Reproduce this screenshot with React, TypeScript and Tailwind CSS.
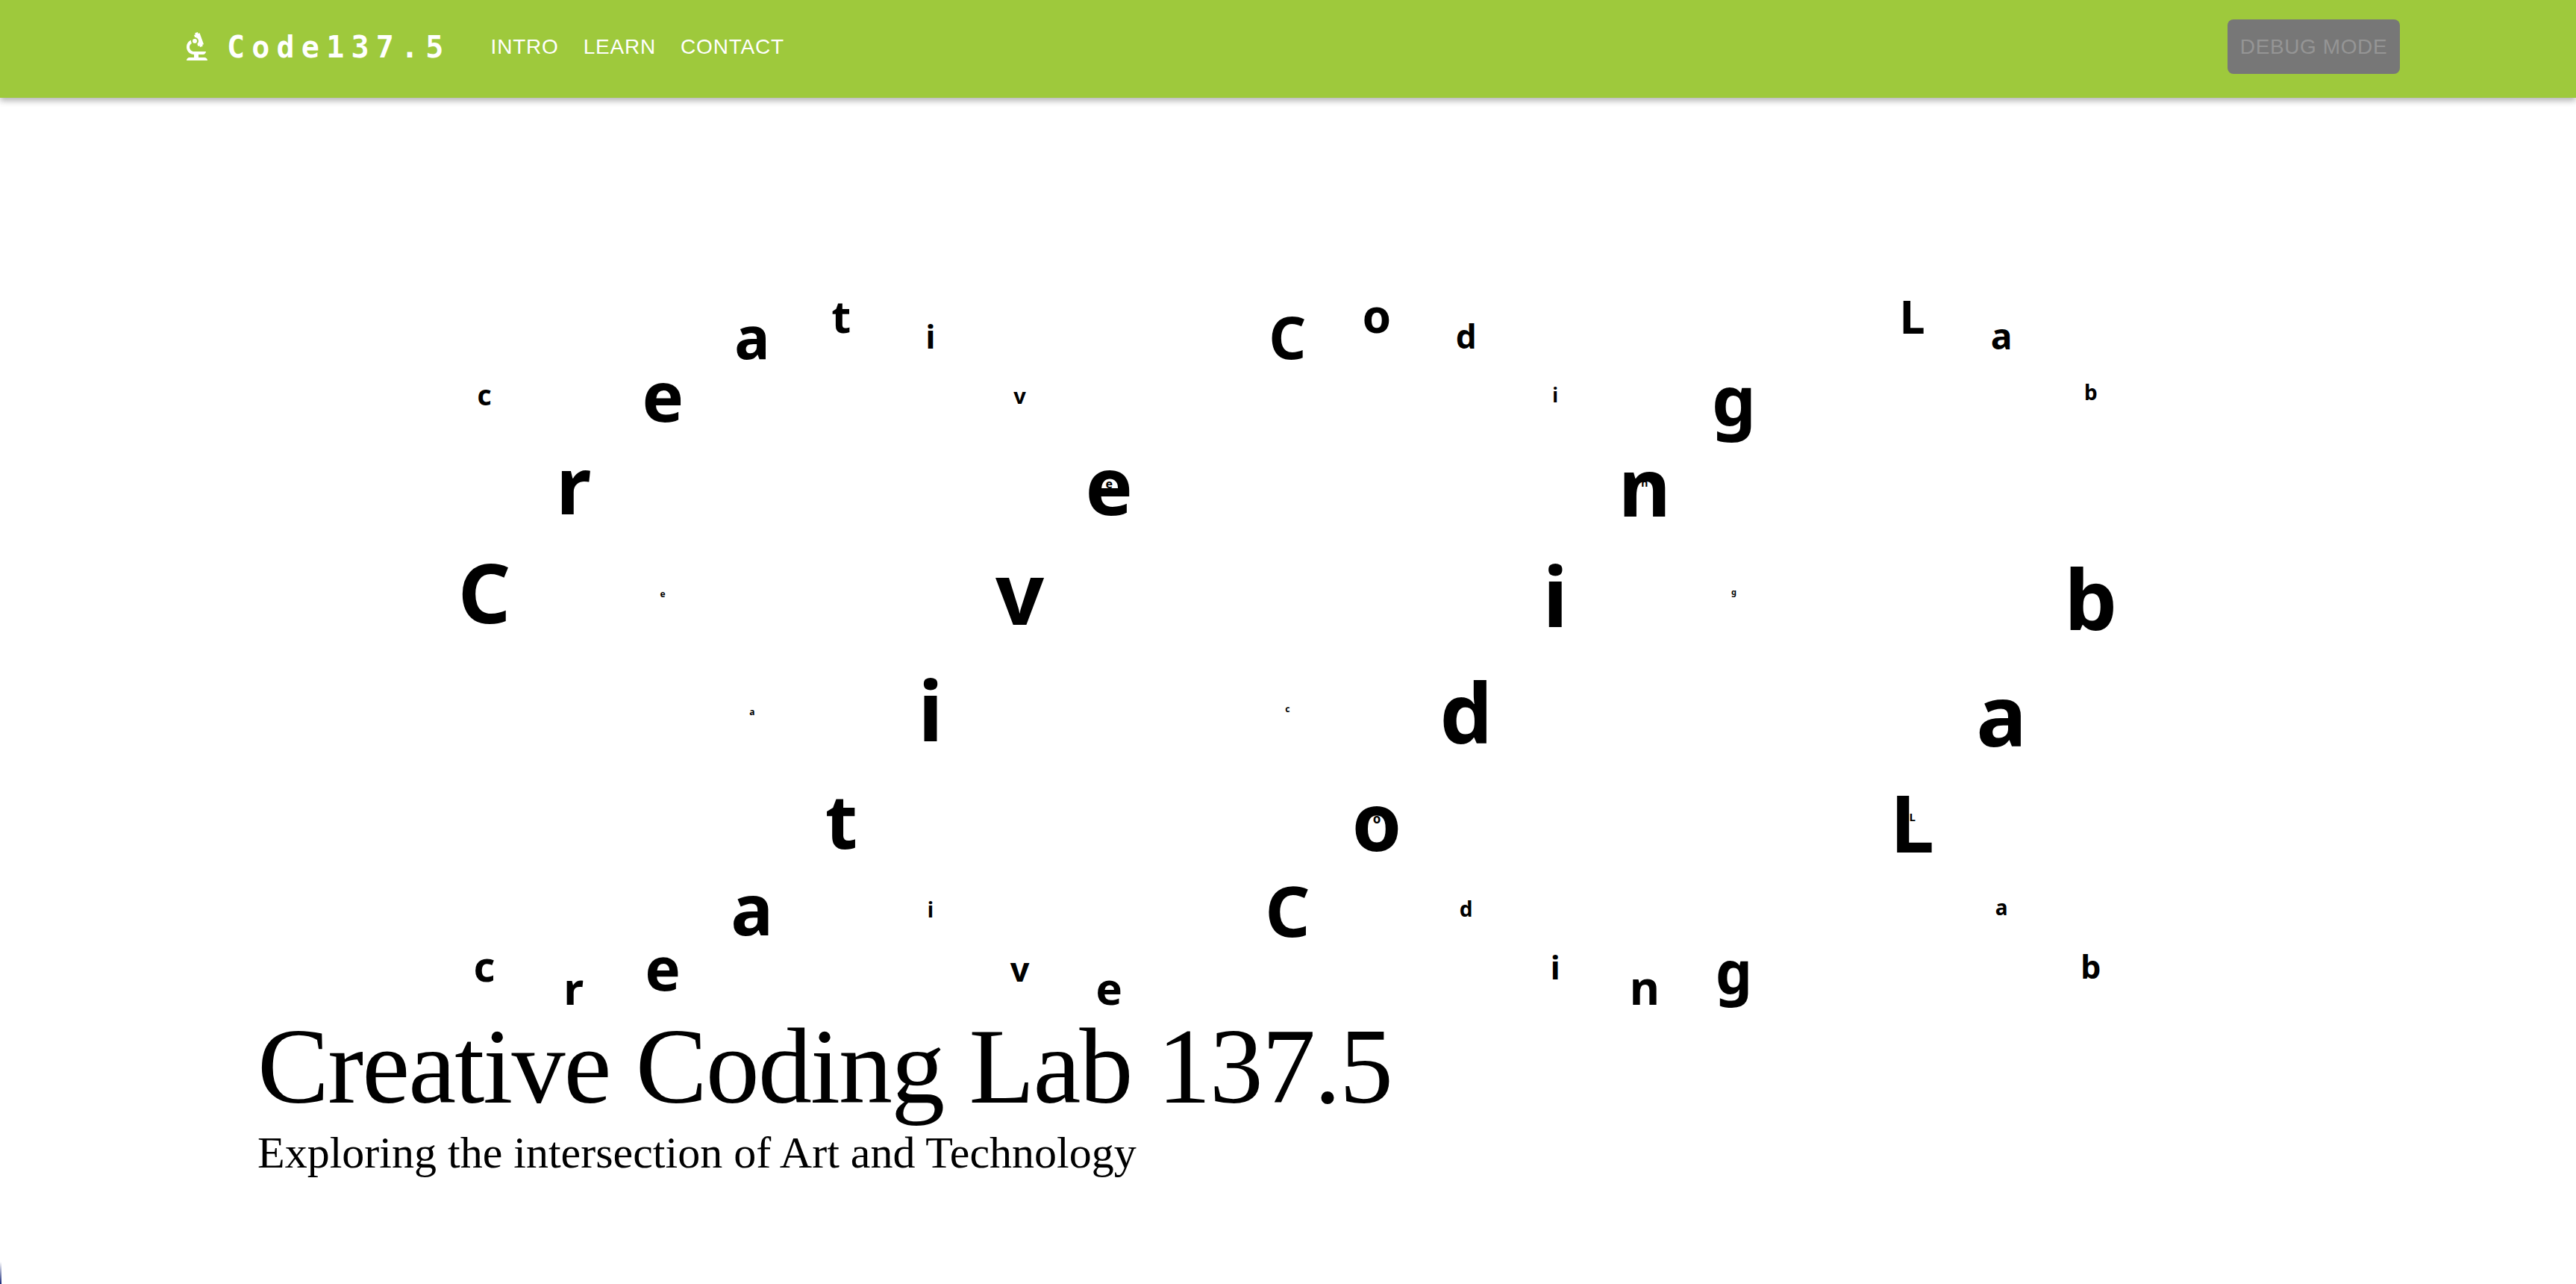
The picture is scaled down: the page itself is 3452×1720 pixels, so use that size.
import { MdBiotech } from "react-icons/md";

// char, column, baseline y (page px), font size
type Glyph = [string, number, number, number];

const COL_START = 649;
const COL_STEP = 119.6;
const HEADER_H = 131;

const glyphs: Glyph[] = [
  // top arc
  ["c", 0, 543, 37],
  ["e", 2, 565, 94],
  ["a", 3, 481, 79],
  ["t", 4, 446, 60],
  ["i", 5, 467, 43],
  ["v", 6, 541, 29],
  ["C", 9, 481, 78],
  ["o", 10, 446, 62],
  ["d", 11, 467, 44],
  ["i", 12, 539, 26],
  ["g", 14, 571, 94],
  ["L", 16, 447, 61],
  ["a", 17, 469, 48],
  ["b", 18, 536, 28],
  // second row
  ["r", 1, 689, 105],
  ["e", 7, 690, 107],
  ["e", 7, 654, 16],
  ["n", 13, 693, 108],
  ["n", 13, 652, 14],
  // centre row
  ["C", 0, 835, 110],
  ["e", 2, 801, 12],
  ["v", 6, 837, 114],
  ["i", 12, 840, 112],
  ["g", 14, 797, 11],
  ["b", 18, 844, 112],
  // fourth row
  ["a", 3, 959, 12],
  ["i", 5, 993, 112],
  ["c", 9, 955, 12],
  ["d", 11, 996, 112],
  ["a", 17, 1000, 113],
  // fifth row
  ["t", 4, 1137, 100],
  ["o", 10, 1140, 107],
  ["o", 10, 1103, 17],
  ["L", 16, 1142, 105],
  ["L", 16, 1100, 15],
  // lower arc
  ["a", 3, 1253, 95],
  ["i", 5, 1229, 28],
  ["C", 9, 1255, 94],
  ["d", 11, 1228, 28],
  ["a", 17, 1226, 28],
  ["c", 0, 1315, 56],
  ["r", 1, 1346, 60],
  ["e", 2, 1327, 80],
  ["v", 6, 1315, 45],
  ["e", 7, 1346, 60],
  ["i", 12, 1312, 43],
  ["n", 13, 1346, 62],
  ["g", 14, 1331, 78],
  ["b", 18, 1311, 43],
];

function LetterField() {
  return (
    <div className="relative h-[1216px] font-['Noto_Sans',sans-serif] font-bold text-black">
      {glyphs.map(([ch, col, baseline, size], i) => (
        <span
          key={i}
          className="absolute -translate-x-1/2 leading-none"
          style={{
            left: COL_START + col * COL_STEP,
            top: baseline - HEADER_H - 0.888 * size,
            fontSize: size,
          }}
        >
          {ch}
        </span>
      ))}
    </div>
  );
}

export default function App() {
  return (
    <div className="relative min-h-[1720px] overflow-hidden bg-white">
      <header className="relative z-10 flex h-[131px] items-center bg-[#9ec93c] pb-[6px] pl-[240px] pr-[236px] shadow-[0_4px_8px_rgba(0,0,0,0.3)]">
        <MdBiotech className="text-white" size={48} />
        <span className="ml-[16px] font-['DejaVu_Sans_Mono',monospace] text-[40px] font-bold tracking-[9.2px] text-white">
          Code137.5
        </span>
        <nav className="ml-[54px] flex gap-[33px] font-['Liberation_Sans',sans-serif] text-[28px] tracking-[0.8px] text-white">
          <a>INTRO</a>
          <a>LEARN</a>
          <a>CONTACT</a>
        </nav>
        <button
          disabled
          className="ml-auto h-[73px] w-[231px] rounded-lg bg-[#777777] font-['Liberation_Sans',sans-serif] text-[28px] tracking-[0.6px] text-[#959595]"
        >
          DEBUG MODE
        </button>
      </header>
      <LetterField />
      <div className="-mt-[1px] pl-[345px] font-['Liberation_Serif',serif] text-black">
        <h1 className="text-[144px] leading-[165px] tracking-[-1.9px]">Creative Coding Lab 137.5</h1>
        <p className="-mt-[1px] text-[60px] leading-[69px]">Exploring the intersection of Art and Technology</p>
      </div>
      {/* sliver of window corner in the bottom left */}
      <div className="absolute bottom-0 left-0 h-[30px] w-[2px] bg-linear-to-b from-transparent to-[#1a2a7a]" />
    </div>
  );
}
